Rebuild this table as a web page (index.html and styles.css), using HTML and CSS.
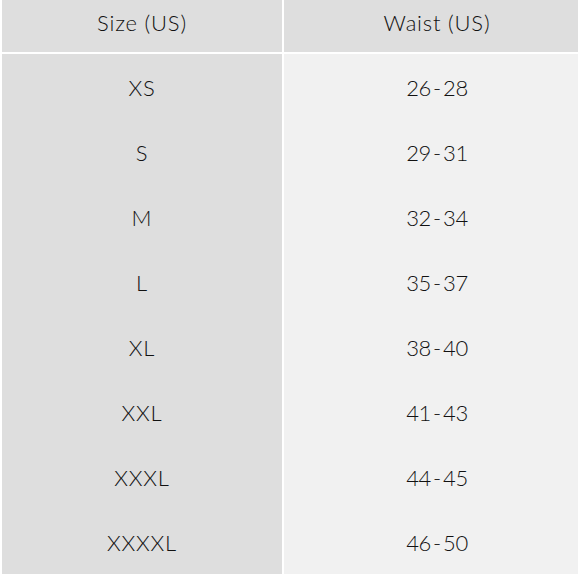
FILE: index.html
```html
<!DOCTYPE html>
<html>
<head>
<meta charset="utf-8">
<link rel="stylesheet" href="styles.css">
</head>
<body>
<div class="chart">
  <div class="head">
    <div class="cell hcell">Size (US)</div>
    <div class="cell hcell waist">Waist (US)</div>
  </div>
  <div class="body">
    <div class="col col-size">
      <div class="cell">XS</div>
      <div class="cell">S</div>
      <div class="cell">M</div>
      <div class="cell">L</div>
      <div class="cell">XL</div>
      <div class="cell">XXL</div>
      <div class="cell">XXXL</div>
      <div class="cell">XXXXL</div>
    </div>
    <div class="col col-waist">
      <div class="cell num">26<span class="dash">-</span>28</div>
      <div class="cell num">29<span class="dash">-</span>31</div>
      <div class="cell num">32<span class="dash">-</span>34</div>
      <div class="cell num">35<span class="dash">-</span>37</div>
      <div class="cell num">38<span class="dash">-</span>40</div>
      <div class="cell num">41<span class="dash">-</span>43</div>
      <div class="cell num">44<span class="dash">-</span>45</div>
      <div class="cell num">46<span class="dash">-</span>50</div>
    </div>
  </div>
</div>
</body>
</html>
```
FILE: styles.css
```css
html, body {
  margin: 0;
  padding: 0;
  background: #ffffff;
}
body {
  font-family: Lato, "Noto Sans", sans-serif;
  font-weight: 300;
  color: #111111;
  width: 580px;
  height: 580px;
  overflow: hidden;
}
.chart {
  padding: 0 2px;
  display: flex;
  flex-direction: column;
  gap: 2px;
}
.head, .body {
  display: grid;
  grid-template-columns: 280px 294px;
  column-gap: 2px;
}
.hcell {
  height: 52px;
  background: #dedede;
  padding-bottom: 7px;
  box-sizing: border-box;
}
.cell {
  display: flex;
  align-items: center;
  justify-content: center;
  font-size: 22px;
  letter-spacing: 0.8px;
}
.waist {
  padding-left: 12px;
}
.col {
  display: flex;
  flex-direction: column;
}
.col .cell {
  height: 65px;
  padding-top: 2px;
  box-sizing: border-box;
}
.col-size { background: #dedede; }
.col-waist { background: #f1f1f1; }
.col-waist .cell { padding-left: 12px; }
.num { letter-spacing: -0.3px; }
.dash { margin: 0 2px; }
```
